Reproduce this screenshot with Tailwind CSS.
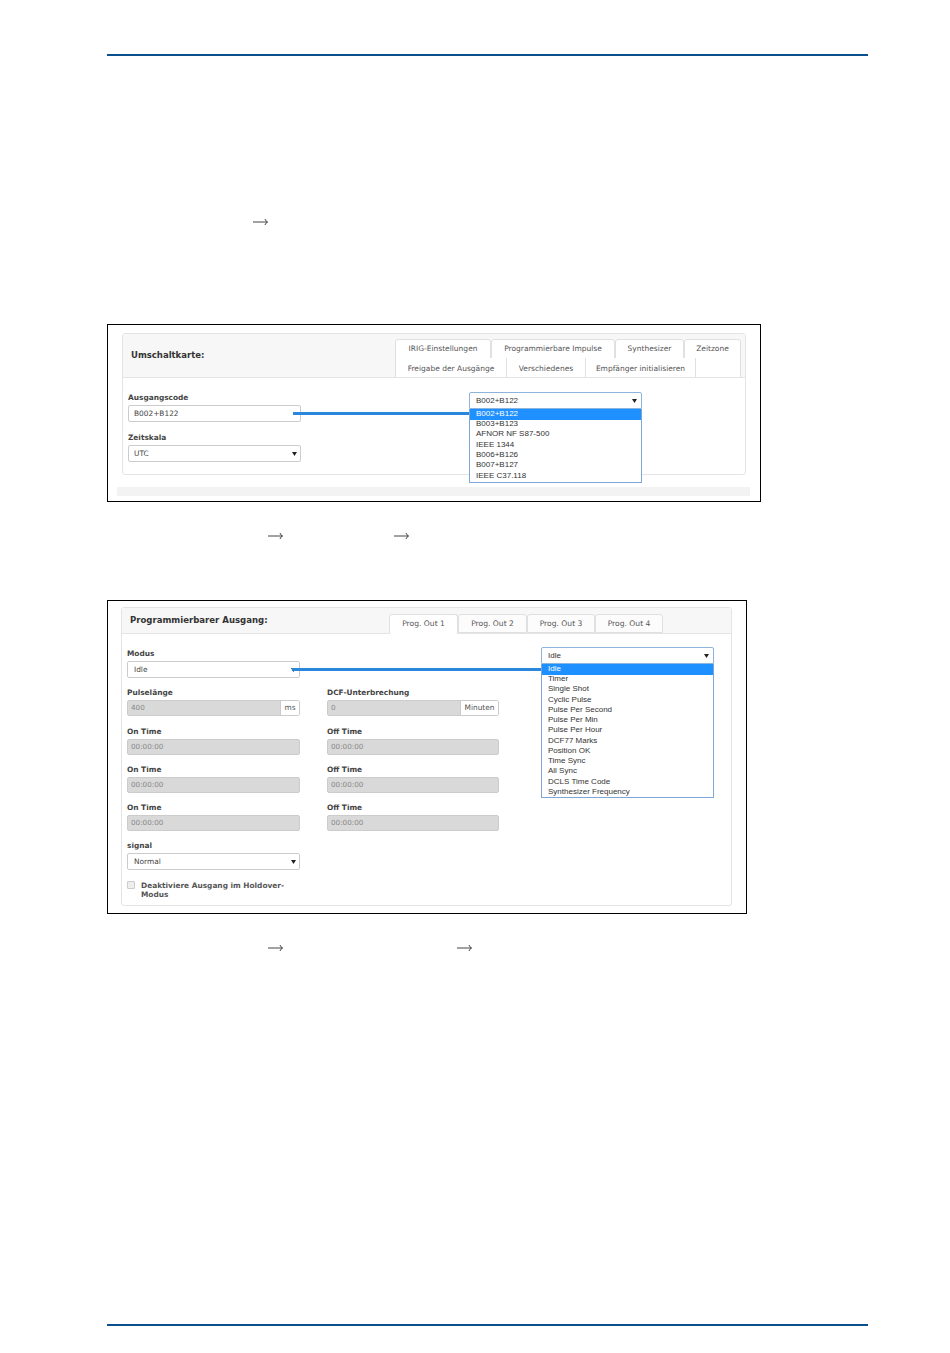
<!DOCTYPE html>
<html lang="de">
<head>
<meta charset="utf-8">
<script src="https://cdn.jsdelivr.net/npm/@tailwindcss/browser@4"></script>
</head>
<body class="bg-white">
<div class="w-[950px] h-[1353px] bg-white pl-[107px] pt-[54px] flex flex-col font-['DejaVu_Sans',sans-serif] text-[#333] overflow-hidden">
  <div class="w-[761px] h-[2px] bg-[#0b4f8c] shrink-0"></div>

  <div class="h-[12px] mt-[160px] ml-[146px] flex shrink-0">
    <svg class="w-[15px] h-[12px]" viewBox="0 0 15 12" fill="none" stroke="#444" stroke-width="1"><path d="M0 6H14.5M12 3Q12.5 5 14.5 6Q12.5 7 12 9"/></svg>
  </div>

  <!-- Figure 1 -->
  <div class="relative w-[654px] h-[178px] mt-[96px] border border-black shrink-0">
    <div class="absolute left-[9px] top-[162px] w-[633px] h-[9px] bg-[#f3f3f3]"></div>
    <div class="ml-[14px] mt-[8px] w-[624px] h-[142px] border border-[#e4e4e4] rounded-[3px] flex flex-col">
      <div class="h-[44px] bg-[#f7f7f7] border-b border-[#e4e4e4] flex">
        <div class="w-[272px] pl-[8px] pt-[14px] text-[8.5px] leading-[14px] font-bold text-[#333]">Umschaltkarte:</div>
        <div class="flex flex-col pt-[5px] text-[7.5px] leading-[18px] text-[#555] text-center">
          <div class="flex h-[19px]">
            <div class="w-[96px] h-[20px] bg-white border border-[#e0e0e0] rounded-t-[3px]">IRIG-Einstellungen</div>
            <div class="w-[124px] h-[20px] bg-white border border-[#e0e0e0] rounded-t-[3px]">Programmierbare Impulse</div>
            <div class="w-[69px] h-[20px] bg-white border border-[#e0e0e0] rounded-t-[3px]">Synthesizer</div>
            <div class="w-[57px] h-[20px] bg-white border border-[#e0e0e0] rounded-t-[3px]">Zeitzone</div>
          </div>
          <div class="flex h-[19px] leading-[21px]">
            <div class="w-[112px] bg-white border-l border-r border-[#e0e0e0]">Freigabe der Ausgänge</div>
            <div class="w-[79px] bg-white border-r border-[#e0e0e0]">Verschiedenes</div>
            <div class="w-[110px] bg-white border-r border-[#e0e0e0]">Empfänger initialisieren</div>
            <div class="w-[45px] bg-white border-r border-[#e0e0e0]"></div>
          </div>
        </div>
      </div>
      <div class="pl-[5px] pt-[15px] w-[178px] flex flex-col text-[7.4px]">
        <div class="leading-[10px] font-bold text-[#444]">Ausgangscode</div>
        <div class="mt-[2px] h-[17px] w-[173px] border border-[#ccc] rounded-[2px] pl-[5px] leading-[15px] text-[#444]">B002+B122</div>
        <div class="mt-[11px] leading-[10px] font-bold text-[#444]">Zeitskala</div>
        <div class="mt-[2px] h-[17px] w-[173px] border border-[#ccc] rounded-[2px] pl-[5px] pr-[3px] leading-[15px] text-[#444] flex justify-between items-center"><span>UTC</span><svg class="w-[5px] h-[4px]" viewBox="0 0 5 4"><path d="M0 0H5L2.5 4Z" fill="#222"/></svg></div>
      </div>
    </div>
    <!-- connector -->
    <div class="absolute left-[185px] top-[87px] w-[177px] h-[3px] bg-[#2b87dc]"></div>
    <!-- popup -->
    <div class="absolute left-[361px] top-[67px] w-[173px] font-['Liberation_Sans',sans-serif] text-[8px] text-[#333] bg-white">
      <div class="h-[17px] border border-[#8fb4dc] rounded-t-[2px] pl-[6px] pr-[4px] leading-[14px] flex justify-between items-center"><span>B002+B122</span><svg class="w-[5px] h-[4px]" viewBox="0 0 5 4"><path d="M0 0H5L2.5 4Z" fill="#222"/></svg></div>
      <div class="h-[74px] border border-t-0 border-[#7ea6d6] leading-[10.35px]">
        <div class="h-[11px] bg-[#1e90ff] text-white pl-[6px] -mb-[1px]">B002+B122</div>
        <div class="pl-[6px]">B003+B123</div>
        <div class="pl-[6px]">AFNOR NF S87-500</div>
        <div class="pl-[6px]">IEEE 1344</div>
        <div class="pl-[6px]">B006+B126</div>
        <div class="pl-[6px]">B007+B127</div>
        <div class="pl-[6px]">IEEE C37.118</div>
      </div>
    </div>
  </div>

  <div class="h-[12px] mt-[28px] flex shrink-0">
    <svg class="ml-[161px] w-[15px] h-[12px]" viewBox="0 0 15 12" fill="none" stroke="#444" stroke-width="1"><path d="M0 6H14.5M12 3Q12.5 5 14.5 6Q12.5 7 12 9"/></svg>
    <svg class="ml-[111px] w-[15px] h-[12px]" viewBox="0 0 15 12" fill="none" stroke="#444" stroke-width="1"><path d="M0 6H14.5M12 3Q12.5 5 14.5 6Q12.5 7 12 9"/></svg>
  </div>

  <!-- Figure 2 -->
  <div class="relative w-[640px] h-[314px] mt-[58px] border border-black shrink-0">
    <div class="ml-[13px] mt-[6px] w-[611px] h-[299px] border border-[#e4e4e4] rounded-[3px] flex flex-col">
      <div class="h-[26px] bg-[#f7f7f7] border-b border-[#e4e4e4] flex">
        <div class="w-[267px] pl-[8px] pt-[5px] text-[8.55px] leading-[14px] font-bold text-[#333]">Programmierbarer Ausgang:</div>
        <div class="flex pt-[6px] text-[7.6px] leading-[18px] text-[#555] text-center">
          <div class="w-[69px] h-[20px] bg-white border border-b-0 border-[#e0e0e0] rounded-t-[3px] z-10">Prog. Out 1</div>
          <div class="w-[69px] h-[19px] bg-[#fcfcfc] border border-[#e0e0e0] rounded-t-[3px]">Prog. Out 2</div>
          <div class="w-[68px] h-[19px] bg-[#fcfcfc] border border-[#e0e0e0] rounded-t-[3px]">Prog. Out 3</div>
          <div class="w-[68px] h-[19px] bg-[#fcfcfc] border border-[#e0e0e0] rounded-t-[3px]">Prog. Out 4</div>
        </div>
      </div>
      <div class="pl-[5px] pt-[14px] grid grid-cols-[200px_172px] grid-rows-[39px_39px_38px_38px_38px_38px_auto] text-[7.4px] leading-[10px]">
        <div class="flex flex-col w-[173px]">
          <div class="mt-[1px] font-bold text-[#444]">Modus</div>
          <div class="mt-[2px] h-[17px] border border-[#ccc] rounded-[2px] pl-[6px] pr-[3px] leading-[15px] text-[#444] flex justify-between items-center"><span>Idle</span><svg class="w-[5px] h-[4px]" viewBox="0 0 5 4"><path d="M0 0H5L2.5 4Z" fill="#222"/></svg></div>
        </div>
        <div></div>

        <div class="flex flex-col w-[173px]">
          <div class="mt-[1px] font-bold text-[#444]">Pulselänge</div>
          <div class="mt-[2px] h-[16px] flex border border-[#ccc] rounded-[2px] leading-[14px]"><div class="flex-1 bg-[#d9d9d9] pl-[3px] text-[#888] text-[7.2px]">400</div><div class="w-[19px] bg-white border-l border-[#ccc] text-center text-[#555]">ms</div></div>
        </div>
        <div class="flex flex-col">
          <div class="mt-[1px] font-bold text-[#444]">DCF-Unterbrechung</div>
          <div class="mt-[2px] h-[16px] flex border border-[#ccc] rounded-[2px] leading-[14px]"><div class="flex-1 bg-[#d9d9d9] pl-[3px] text-[#888] text-[7.2px]">0</div><div class="w-[38px] bg-white border-l border-[#ccc] text-center text-[#555]">Minuten</div></div>
        </div>

        <div class="flex flex-col w-[173px]">
          <div class="mt-[1px] font-bold text-[#444]">On Time</div>
          <div class="mt-[2px] h-[16px] bg-[#d9d9d9] border border-[#ccc] rounded-[2px] pl-[3px] leading-[13px] text-[#888] text-[7.2px]">00:00:00</div>
        </div>
        <div class="flex flex-col">
          <div class="mt-[1px] font-bold text-[#444]">Off Time</div>
          <div class="mt-[2px] h-[16px] bg-[#d9d9d9] border border-[#ccc] rounded-[2px] pl-[3px] leading-[13px] text-[#888] text-[7.2px]">00:00:00</div>
        </div>

        <div class="flex flex-col w-[173px]">
          <div class="mt-[1px] font-bold text-[#444]">On Time</div>
          <div class="mt-[2px] h-[16px] bg-[#d9d9d9] border border-[#ccc] rounded-[2px] pl-[3px] leading-[13px] text-[#888] text-[7.2px]">00:00:00</div>
        </div>
        <div class="flex flex-col">
          <div class="mt-[1px] font-bold text-[#444]">Off Time</div>
          <div class="mt-[2px] h-[16px] bg-[#d9d9d9] border border-[#ccc] rounded-[2px] pl-[3px] leading-[13px] text-[#888] text-[7.2px]">00:00:00</div>
        </div>

        <div class="flex flex-col w-[173px]">
          <div class="mt-[1px] font-bold text-[#444]">On Time</div>
          <div class="mt-[2px] h-[16px] bg-[#d9d9d9] border border-[#ccc] rounded-[2px] pl-[3px] leading-[13px] text-[#888] text-[7.2px]">00:00:00</div>
        </div>
        <div class="flex flex-col">
          <div class="mt-[1px] font-bold text-[#444]">Off Time</div>
          <div class="mt-[2px] h-[16px] bg-[#d9d9d9] border border-[#ccc] rounded-[2px] pl-[3px] leading-[13px] text-[#888] text-[7.2px]">00:00:00</div>
        </div>

        <div class="flex flex-col w-[173px]">
          <div class="mt-[1px] font-bold text-[#444]">signal</div>
          <div class="mt-[2px] h-[17px] border border-[#ccc] rounded-[2px] pl-[6px] pr-[3px] leading-[15px] text-[#444] flex justify-between items-center"><span>Normal</span><svg class="w-[5px] h-[4px]" viewBox="0 0 5 4"><path d="M0 0H5L2.5 4Z" fill="#222"/></svg></div>
        </div>
        <div></div>

        <div class="col-span-2 flex w-[173px] mt-[3px]">
          <div class="w-[8px] h-[8px] bg-[#eee] border border-[#ccc] rounded-[1px] shrink-0"></div>
          <div class="ml-[6px] font-bold text-[#555] leading-[9px]">Deaktiviere Ausgang im Holdover-Modus</div>
        </div>
      </div>
    </div>
    <!-- connector -->
    <div class="absolute left-[184px] top-[67px] w-[249px] h-[3px] bg-[#2b87dc]"></div>
    <!-- popup -->
    <div class="absolute left-[433px] top-[46px] w-[173px] font-['Liberation_Sans',sans-serif] text-[8px] text-[#333] bg-white">
      <div class="h-[17px] border border-[#8fb4dc] rounded-t-[2px] pl-[6px] pr-[4px] leading-[14px] flex justify-between items-center"><span>Idle</span><svg class="w-[5px] h-[4px]" viewBox="0 0 5 4"><path d="M0 0H5L2.5 4Z" fill="#222"/></svg></div>
      <div class="h-[134px] border border-t-0 border-[#7ea6d6] leading-[10.27px]">
        <div class="h-[11px] bg-[#1e90ff] text-white pl-[6px] -mb-[1px]">Idle</div>
        <div class="pl-[6px]">Timer</div>
        <div class="pl-[6px]">Single Shot</div>
        <div class="pl-[6px]">Cyclic Pulse</div>
        <div class="pl-[6px]">Pulse Per Second</div>
        <div class="pl-[6px]">Pulse Per Min</div>
        <div class="pl-[6px]">Pulse Per Hour</div>
        <div class="pl-[6px]">DCF77 Marks</div>
        <div class="pl-[6px]">Position OK</div>
        <div class="pl-[6px]">Time Sync</div>
        <div class="pl-[6px]">All Sync</div>
        <div class="pl-[6px]">DCLS Time Code</div>
        <div class="pl-[6px]">Synthesizer Frequency</div>
      </div>
    </div>
  </div>

  <div class="h-[12px] mt-[28px] flex shrink-0">
    <svg class="ml-[161px] w-[15px] h-[12px]" viewBox="0 0 15 12" fill="none" stroke="#444" stroke-width="1"><path d="M0 6H14.5M12 3Q12.5 5 14.5 6Q12.5 7 12 9"/></svg>
    <svg class="ml-[174px] w-[15px] h-[12px]" viewBox="0 0 15 12" fill="none" stroke="#444" stroke-width="1"><path d="M0 6H14.5M12 3Q12.5 5 14.5 6Q12.5 7 12 9"/></svg>
  </div>

  <div class="w-[761px] h-[2px] bg-[#0b4f8c] mt-[370px] shrink-0"></div>
</div>
</body>
</html>
